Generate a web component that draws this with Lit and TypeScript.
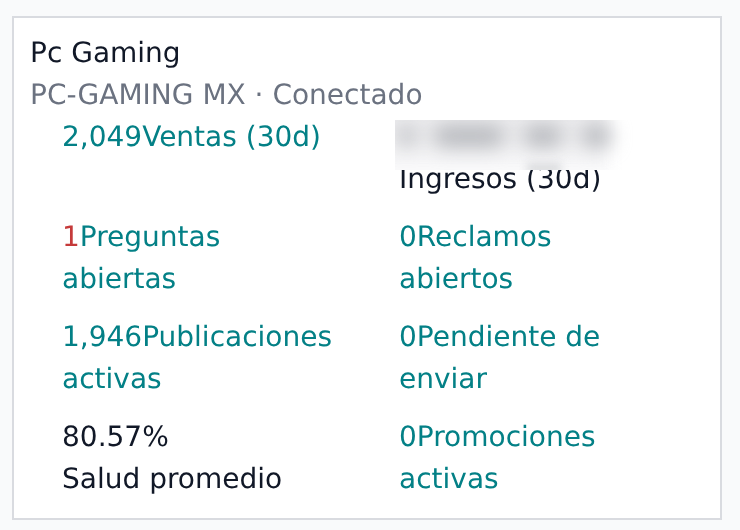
import { LitElement, html, css } from "lit";
import { customElement } from "lit/decorators.js";

@customElement("app-root")
export class AppRoot extends LitElement {
  static styles = css`
    :host {
      display: block;
      width: 740px;
      height: 530px;
      box-sizing: border-box;
      padding: 16px 18px 10px 12px;
      background: #f9fafb;
      font-family: "DejaVu Sans", sans-serif;
      font-size: 28px;
      line-height: 42px;
      text-rendering: geometricPrecision;
      color: #111827;
    }
    .card {
      position: relative;
      box-sizing: border-box;
      height: 504px;
      padding: 14px 16px 0 16px;
      background: #fff;
      border: 2px solid #d9dbe0;
    }
    .layer { will-change: transform; }
    .sub { color: #6b7280; }
    .grid {
      display: grid;
      grid-template-columns: 1fr 1fr;
      grid-auto-rows: 84px;
      row-gap: 16px;
    }
    .cell { padding: 0 32px; min-width: 0; }
    .link { color: #038086; }
    .red { color: #c53a3a; }
    .block { display: block; }
    .mask {
      position: absolute;
      left: 381px;
      top: 102px;
      width: 240px;
      height: 50px;
      overflow: hidden;
      background: #fff;
      z-index: 1;
    }
    .haze {
      position: absolute;
      left: -20px;
      top: -20px;
      width: 234px;
      height: 76px;
      background: linear-gradient(#eaeaec, #eeeef0 50%, #fbfbfc);
      filter: blur(7px);
    }
    .blobs {
      position: relative;
      display: flex;
      height: 100%;
      filter: blur(10px);
      align-items: flex-start;
      padding-top: 6px;
      box-sizing: border-box;
    }
    .blob { height: 20px; background: #b2b4b9; border-radius: 10px; flex: none; }
    .b1 { width: 16px; margin-left: 4px; }
    .b2 { width: 72px; margin-left: 18px; }
    .b3 { width: 40px; margin-left: 18px; }
    .b4 { width: 30px; margin-left: 18px; }
    .tail {
      position: absolute;
      left: 132px;
      top: 44px;
      width: 34px;
      height: 8px;
      background: #d4d5d8;
      filter: blur(4px);
    }
  `;

  render() {
    return html`
      <div class="card">
        <div class="layer">
          <div>Pc Gaming</div>
          <div class="sub">PC-GAMING MX · Conectado</div>
        </div>
        <div class="grid layer">
          <div class="cell link">2,049Ventas (30d)</div>
          <div class="cell"><span class="block">&nbsp;</span><span class="block">Ingresos (30d)</span></div>
          <div class="cell link"><span class="red">1</span>Preguntas abiertas</div>
          <div class="cell link">0Reclamos abiertos</div>
          <div class="cell link">1,946Publicaciones activas</div>
          <div class="cell link">0Pendiente de enviar</div>
          <div class="cell"><span class="block">80.57%</span><span class="block">Salud promedio</span></div>
          <div class="cell link">0Promociones activas</div>
        </div>
        <div class="mask">
          <div class="haze"></div>
          <div class="blobs">
            <div class="blob b1"></div>
            <div class="blob b2"></div>
            <div class="blob b3"></div>
            <div class="blob b4"></div>
          </div>
          <div class="tail"></div>
        </div>
      </div>
    `;
  }
}
